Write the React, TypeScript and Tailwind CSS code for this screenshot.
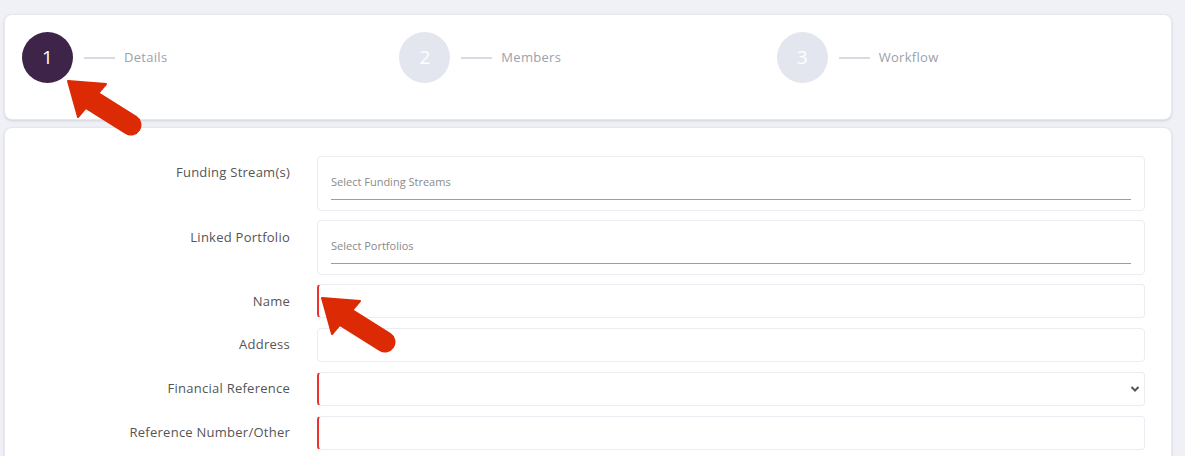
import React from 'react';

const steps = [
  { n: 1, label: 'Details', active: true },
  { n: 2, label: 'Members', active: false },
  { n: 3, label: 'Workflow', active: false },
];

const Arrow = ({ className }: { className: string }) => (
  <svg className={className} width="84" height="60" viewBox="-3 -3 84 60">
    <line x1="20" y1="17" x2="63" y2="44" stroke="#dc2a04" strokeWidth="21" strokeLinecap="round" />
    <polygon points="0,0 38,3 10,36" fill="#dc2a04" stroke="#dc2a04" strokeWidth="2" strokeLinejoin="round" />
  </svg>
);

const Label = ({ children }: { children: React.ReactNode }) => (
  <div className="pt-[7px] text-right text-[13px] font-medium leading-[18px] tracking-[0.25px] text-[#555]">
    {children}
  </div>
);

const MultiSelect = ({ placeholder }: { placeholder: string }) => (
  <div className="h-[55px] rounded border border-[#ebedf2] bg-white px-[13px] pt-[18px]">
    <div className="text-[11px] leading-[14px] text-[#8a8a8a]">{placeholder}</div>
    <div className="mt-[10px] h-px bg-[#9e9e9e]"></div>
  </div>
);

const TextInput = ({ required, select }: { required?: boolean; select?: boolean }) => (
  <div
    className={
      'flex h-[34px] items-center justify-end rounded border border-[#ebedf2] bg-white pr-[4px] ' +
      (required ? 'border-l-2 border-l-[#ef2f2f]' : '')
    }
  >
    {select && (
      <svg width="10" height="8" viewBox="0 0 10 8">
        <path d="M1.5 2 L5 5.5 L8.5 2" fill="none" stroke="#555" strokeWidth="2" />
      </svg>
    )}
  </div>
);

export default function App() {
  return (
    <div className="relative h-[456px] overflow-hidden bg-[#f0f1f7] pl-[4px] pr-[13px] pt-[14px] font-['Open_Sans',sans-serif]">
      <div className="h-[106px] rounded-lg border border-[#e6e8ee] bg-white px-[17px] pt-[17px] shadow-sm">
        <div className="grid grid-cols-3">
          {steps.map(s => (
            <div key={s.n} className="flex items-center">
              <div
                className={
                  'flex h-[51px] w-[51px] items-center justify-center rounded-full text-[19px] text-white ' +
                  (s.active ? 'bg-[#3d2448]' : 'bg-[#e3e6ee]')
                }
              >
                {s.n}
              </div>
              <div className="ml-[11px] h-[2px] w-[31px] bg-[#d8dbe3]"></div>
              <div className="ml-[9px] text-[13px] font-medium tracking-[0.3px] text-[#9ca1ab]">{s.label}</div>
            </div>
          ))}
        </div>
      </div>

      <div className="mt-[7px] h-[400px] rounded-lg border border-[#e6e8ee] bg-white pr-[26px] pt-[28px] shadow-sm">
        <div className="grid grid-cols-[285px_1fr] gap-x-[27px] gap-y-[10px]">
          <Label>Funding Stream(s)</Label>
          <MultiSelect placeholder="Select Funding Streams" />
          <Label>Linked Portfolio</Label>
          <div className="-mt-px">
            <MultiSelect placeholder="Select Portfolios" />
          </div>
          <Label>Name</Label>
          <div className="-mt-px">
            <TextInput required />
          </div>
          <Label>Address</Label>
          <TextInput />
          <Label>Financial Reference</Label>
          <TextInput required select />
          <Label>Reference Number/Other</Label>
          <TextInput required />
        </div>
      </div>

      <Arrow className="absolute left-[65px] top-[78px]" />
      <Arrow className="absolute left-[319px] top-[295px]" />
    </div>
  );
}
